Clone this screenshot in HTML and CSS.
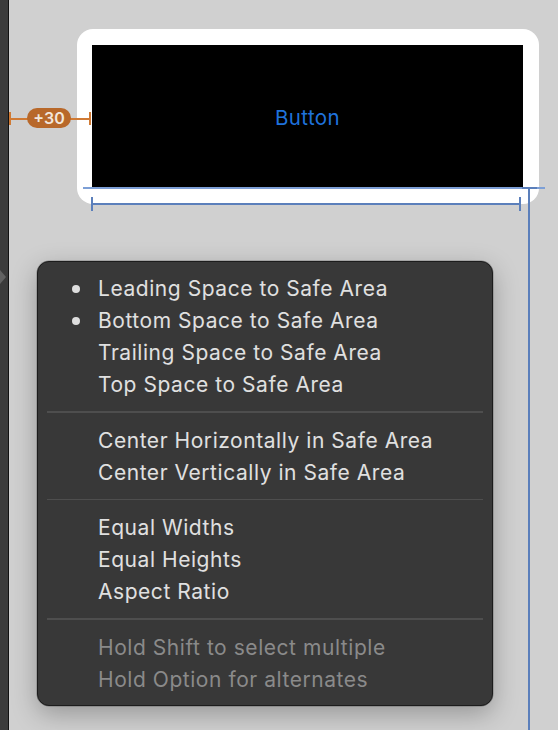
FILE: index.html
```html
<!DOCTYPE html>
<html>
<head>
<meta charset="utf-8">
<link rel="stylesheet" href="styles.css">
</head>
<body>
<div class="app">
  <div class="sidebar"><span class="disclosure"></span></div>
  <div class="canvas">
    <div class="device">
      <div class="screen"><span class="btn-label">Button</span></div>
    </div>
    <div class="c-lead">
      <span class="cap cap-l"></span>
      <span class="pill">+30</span>
      <span class="cap cap-r"></span>
    </div>
    <div class="safe-h"></div>
    <div class="safe-v"></div>
    <div class="safe-t"></div>
    <div class="c-width"><span class="wcap wcap-l"></span><span class="wcap wcap-r"></span></div>

    <div class="menu">
      <div class="group">
        <div class="item checked">Leading Space to Safe Area</div>
        <div class="item checked">Bottom Space to Safe Area</div>
        <div class="item">Trailing Space to Safe Area</div>
        <div class="item">Top Space to Safe Area</div>
      </div>
      <div class="sep"></div>
      <div class="group">
        <div class="item">Center Horizontally in Safe Area</div>
        <div class="item">Center Vertically in Safe Area</div>
      </div>
      <div class="sep"></div>
      <div class="group">
        <div class="item">Equal Widths</div>
        <div class="item">Equal Heights</div>
        <div class="item">Aspect Ratio</div>
      </div>
      <div class="sep"></div>
      <div class="group">
        <div class="item disabled">Hold Shift to select multiple</div>
        <div class="item disabled">Hold Option for alternates</div>
      </div>
    </div>
  </div>
</div>
</body>
</html>
```

FILE: styles.css
```css
* { box-sizing: border-box; }
html, body { margin: 0; padding: 0; }
body {
  width: 558px;
  height: 730px;
  overflow: hidden;
  font-family: Inter, "Noto Sans", sans-serif;
  background: #d0d0d0;
}
.app { display: flex; height: 730px; }
.sidebar {
  width: 9px;
  background: #3b3b3b;
  border-right: 1px solid #111;
  position: relative;
}
.disclosure {
  position: absolute;
  left: 0;
  top: 270px;
  width: 0; height: 0;
  border-top: 7px solid transparent;
  border-bottom: 7px solid transparent;
  border-left: 6px solid #626262;
}
.canvas {
  flex: 1;
  position: relative;
  background: #d0d0d0;
}
.device {
  position: absolute;
  left: 68px; top: 29px;
  width: 462px; height: 175px;
  background: #fff;
  border-radius: 16px;
  padding: 16px 16px 17px 15px;
}
.screen {
  width: 431px; height: 142px;
  background: #000;
  display: flex; align-items: center; justify-content: center;
}
.btn-label {
  color: #1f72dc;
  font-size: 20.5px;
  letter-spacing: 0.4px;
  padding-top: 2px;
}
.c-lead {
  position: absolute;
  left: 0; top: 112px;
  width: 82px; height: 13px;
}
.c-lead::before {
  content: "";
  position: absolute;
  left: 0; right: 0; top: 6px; height: 1.5px;
  background: #d07a34;
}
.cap { position: absolute; top: 0; width: 2px; height: 13px; background: #d07a34; }
.cap-l { left: 0; }
.cap-r { right: 0; }
.pill {
  position: absolute;
  left: 18px; top: -4px;
  width: 44px; height: 20px;
  border-radius: 10px;
  background: #b8682a;
  color: #f2e6dc;
  font-size: 16px;
  font-weight: 600;
  line-height: 20px;
  text-align: center;
}
.safe-h {
  position: absolute;
  left: 74px; top: 187px;
  width: 462px; height: 1.5px;
  background: #7d9fd6;
}
.safe-t {
  position: absolute;
  left: 513px; top: 187px;
  width: 15px; height: 2px;
  background: #5b7fbb;
}
.safe-v {
  position: absolute;
  left: 519px; top: 188px;
  width: 2px; height: 560px;
  background: #5b7fbb;
}
.c-width {
  position: absolute;
  left: 82px; top: 197px;
  width: 430px; height: 14px;
}
.c-width::before {
  content: "";
  position: absolute;
  left: 0; right: 0; top: 6px; height: 1.5px;
  background: #5b7fbb;
}
.wcap { position: absolute; top: 0; width: 2px; height: 14px; background: #5b7fbb; }
.wcap-l { left: 0; }
.wcap-r { right: 0; }

.menu {
  position: absolute;
  left: 28px; top: 261px;
  width: 456px; height: 445px;
  background: #383838;
  border: 1px solid #1c1c1c;
  border-radius: 12px;
  padding: 11px 9px 9px 9px;
  box-shadow: 0 8px 26px rgba(0,0,0,0.28), 0 0 0 0.5px rgba(0,0,0,0.3);
  display: flex;
  flex-direction: column;
}
.group { display: flex; flex-direction: column; }
.item {
  height: 32px;
  line-height: 32px;
  padding-left: 51px;
  font-size: 21px;
  color: #e0e0e0;
  letter-spacing: 0.55px;
  position: relative;
  white-space: nowrap;
}
.item.checked::before {
  content: "";
  position: absolute;
  left: 25px; top: 12px;
  width: 8px; height: 8px;
  border-radius: 50%;
  background: #dedede;
}
.item.disabled { color: #8a8a8a; }
.sep {
  height: 2px;
  margin: 10px 0 12px;
  background: #4e4e4e;
}
```
